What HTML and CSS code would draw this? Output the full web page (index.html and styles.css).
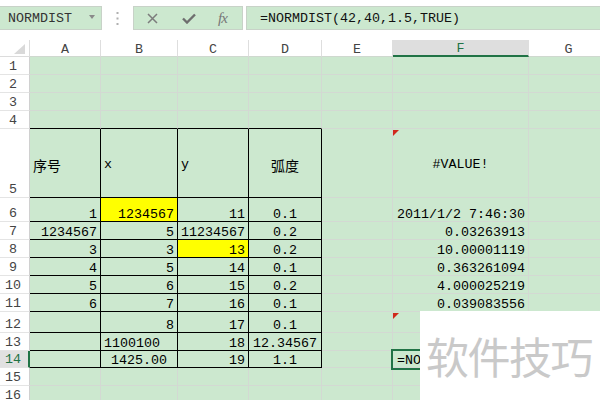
FILE: index.html
```html
<!DOCTYPE html>
<html>
<head>
<meta charset="utf-8">
<link rel="stylesheet" href="styles.css">
</head>
<body>
<div class="toolbar">
  <div class="namebox"><span class="nametext">NORMDIST</span><span class="arrow"></span></div>
  <div class="sep"><svg width="3" height="13" viewBox="0 0 3 13"><rect x="0.5" y="0" width="2" height="2" fill="#b0b0b0"/><rect x="0.5" y="5.5" width="2" height="2" fill="#b0b0b0"/><rect x="0.5" y="11" width="2" height="2" fill="#b0b0b0"/></svg></div>
  <div class="btns">
    <svg class="ic-x" width="11" height="11" viewBox="0 0 11 11"><path d="M1 1 L10 10 M10 1 L1 10" stroke="#7c7c7c" stroke-width="1.5" fill="none"/></svg>
    <svg class="ic-ok" width="14" height="11" viewBox="0 0 14 11"><path d="M1 5.5 L5 9.5 L13 1.5" stroke="#6e6e6e" stroke-width="2.4" fill="none"/></svg>
    <span class="fx">fx</span>
  </div>
  <div class="formula">=NORMDIST(42,40,1.5,TRUE)</div>
</div>

<div class="sheet">
  <div class="corner"><span class="tri"></span></div>
  <div class="ch">A</div><div class="ch">B</div><div class="ch">C</div><div class="ch">D</div><div class="ch">E</div><div class="ch selc">F</div><div class="ch">G</div>

  <div class="rh">1</div><div class="c"></div><div class="c"></div><div class="c"></div><div class="c"></div><div class="c"></div><div class="c"></div><div class="c"></div>
  <div class="rh">2</div><div class="c"></div><div class="c"></div><div class="c"></div><div class="c"></div><div class="c"></div><div class="c"></div><div class="c"></div>
  <div class="rh">3</div><div class="c"></div><div class="c"></div><div class="c"></div><div class="c"></div><div class="c"></div><div class="c"></div><div class="c"></div>
  <div class="rh">4</div><div class="c bb"></div><div class="c bb"></div><div class="c bb"></div><div class="c bb"></div><div class="c"></div><div class="c"></div><div class="c"></div>

  <div class="rh">5</div><div class="c k mid"><span class="zh">序号</span></div><div class="c k mid">x</div><div class="c k mid">y</div><div class="c k mid m"><span class="zh">弧度</span></div><div class="c"></div><div class="c mid m note">#VALUE!</div><div class="c"></div>

  <div class="rh">6</div><div class="c k r">1</div><div class="c k r y">1234567</div><div class="c k r">11</div><div class="c k m">0.1</div><div class="c"></div><div class="c r">2011/1/2 7:46:30</div><div class="c"></div>
  <div class="rh">7</div><div class="c k r">1234567</div><div class="c k r">5</div><div class="c k r">11234567</div><div class="c k m">0.2</div><div class="c"></div><div class="c r">0.03263913</div><div class="c"></div>
  <div class="rh">8</div><div class="c k r">3</div><div class="c k r">3</div><div class="c k r y">13</div><div class="c k m">0.2</div><div class="c"></div><div class="c r">10.00001119</div><div class="c"></div>
  <div class="rh">9</div><div class="c k r">4</div><div class="c k r">5</div><div class="c k r">14</div><div class="c k m">0.1</div><div class="c"></div><div class="c r">0.363261094</div><div class="c"></div>
  <div class="rh">10</div><div class="c k r">5</div><div class="c k r">6</div><div class="c k r">15</div><div class="c k m">0.2</div><div class="c"></div><div class="c r">4.000025219</div><div class="c"></div>
  <div class="rh">11</div><div class="c k r">6</div><div class="c k r">7</div><div class="c k r">16</div><div class="c k m">0.1</div><div class="c"></div><div class="c r">0.039083556</div><div class="c"></div>
  <div class="rh">12</div><div class="c k"></div><div class="c k r">8</div><div class="c k r">17</div><div class="c k m mark">0.1</div><div class="c"></div><div class="c note"></div><div class="c"></div>
  <div class="rh">13</div><div class="c k"></div><div class="c k">1100100</div><div class="c k r">18</div><div class="c k m">12.34567</div><div class="c"></div><div class="c"></div><div class="c"></div>
  <div class="rh selr">14</div><div class="c k"></div><div class="c k m">1425.00</div><div class="c k r">19</div><div class="c k m">1.1</div><div class="c"></div><div class="c active">=NORMDIST(42,40,1.5,TRUE)</div><div class="c"></div>
  <div class="rh">15</div><div class="c"></div><div class="c"></div><div class="c"></div><div class="c"></div><div class="c"></div><div class="c"></div><div class="c"></div>
  <div class="rh">16</div><div class="c"></div><div class="c"></div><div class="c"></div><div class="c"></div><div class="c"></div><div class="c"></div><div class="c"></div>
</div>

<div class="watermark">软件技巧</div>
</body>
</html>
```

FILE: styles.css
```css
html, body {
  margin: 0;
  padding: 0;
  width: 600px;
  height: 400px;
  overflow: hidden;
  background: #ffffff;
  font-family: "Liberation Mono", "Noto Sans CJK SC", monospace;
  font-size: 13.33px;
  color: #000;
}

.toolbar {
  height: 40px;
  box-sizing: border-box;
  padding-top: 6px;
  display: flex;
  align-items: flex-start;
}

.namebox {
  width: 102px;
  height: 24px;
  box-sizing: border-box;
  background: #cce8cf;
  border: 1px solid #c8d2c8;
  border-left: none;
  display: flex;
  align-items: center;
  padding-left: 8px;
  color: #333;
}
.nametext { flex: 1; }
.arrow {
  width: 0;
  height: 0;
  border-left: 3.5px solid transparent;
  border-right: 3.5px solid transparent;
  border-top: 4px solid #8a8a8a;
  margin-right: 6px;
  margin-top: -2px;
}

.sep {
  width: 31px;
  height: 24px;
  display: flex;
  align-items: center;
  justify-content: center;
}

.btns {
  width: 110px;
  height: 24px;
  box-sizing: border-box;
  background: #cce8cf;
  border: 1px solid #c8d2c8;
  display: flex;
  align-items: center;
  padding-left: 13px;
}
.ic-x { margin-right: 24px; }
.ic-ok { margin-right: 22px; margin-top: 1px; }
.fx {
  font-family: "Liberation Serif", serif;
  font-style: italic;
  font-size: 15px;
  color: #777;
  letter-spacing: -1px;
}

.formula {
  flex: 1;
  margin-left: 3px;
  height: 24px;
  box-sizing: border-box;
  background: #cce8cf;
  border: 1px solid #c8d2c8;
  border-right: none;
  display: flex;
  align-items: center;
  padding-left: 13px;
  color: #111;
}

.sheet {
  display: grid;
  grid-template-columns: 30px 71px 77px 71px 73px 71px 136px 80px;
  grid-template-rows: 17px 18px 18px 18px 18px 69px 24px 18px 18px 18px 18px 18px 21px 18px 17px 18px 18px;
  width: 600px;
  overflow: hidden;
}

.sheet > div {
  box-sizing: border-box;
  min-width: 0;
  overflow: hidden;
  white-space: nowrap;
}

.corner {
  background: #fff;
  border-right: 1px solid #dcdcdc;
  border-bottom: 1px solid #dcdcdc;
  display: flex;
  align-items: flex-end;
  justify-content: flex-end;
  padding: 0 4px 2px 0;
}
.tri {
  width: 11px;
  height: 10px;
  background: #d9d9d9;
  clip-path: polygon(100% 0, 100% 100%, 0 100%);
}

.ch {
  background: #fff;
  border-right: 1px solid #dedede;
  border-bottom: 1px solid #cfd8cf;
  display: flex;
  align-items: flex-end;
  justify-content: center;
  line-height: 13px;
  color: #444;
}
.ch.selc {
  background: #dedede;
  border-bottom: 2px solid #217346;
  color: #217346;
  line-height: 12px;
}

.rh {
  background: #fff;
  border-right: 1px solid #d0d0d0;
  border-bottom: 1px solid #e4e4e4;
  display: flex;
  align-items: flex-end;
  justify-content: center;
  padding-right: 3px;
  line-height: 14px;
  color: #444;
}
.rh.selr {
  background: #e1e1e1;
  border-right: 2px solid #217346;
  padding-right: 2px;
  color: #217346;
}

.c {
  background: #cce8cf;
  border-right: 1px solid #d3d9d3;
  border-bottom: 1px solid #d3d9d3;
  display: flex;
  align-items: flex-end;
  padding: 0 3px;
  line-height: 12px;
}
.c.k {
  border-right-color: #000;
  border-bottom-color: #000;
}
.c.bb { border-bottom-color: #000; }
.c.r { justify-content: flex-end; }
.c.m { justify-content: center; }
.c.mid { align-items: center; line-height: 16px; padding-top: 3px; }
.c.y { background: #ffff00; }
.zh { font-family: "Noto Sans CJK SC", sans-serif; font-size: 14px; }

.note { position: relative; }
.note::before {
  content: "";
  position: absolute;
  left: 0;
  top: 1px;
  width: 6px;
  height: 6px;
  background: #d0281c;
  clip-path: polygon(0 0, 100% 0, 0 100%);
}

.mark { position: relative; }
.mark::after {
  content: "";
  position: absolute;
  right: -1px;
  top: 2px;
  bottom: 3px;
  width: 1px;
  background: #f0805c;
}

.c.active {
  position: relative;
  z-index: 1;
  outline: 2px solid #217346;
  outline-offset: 0;
  overflow: visible;
  padding-left: 4px;
}

.watermark {
  position: absolute;
  left: 420px;
  top: 311px;
  width: 180px;
  height: 89px;
  background: #fff;
  z-index: 5;
  box-sizing: border-box;
  padding: 14px 0 0 6px;
  font-family: "Noto Sans CJK SC", sans-serif;
  font-size: 43px;
  line-height: 60px;
  letter-spacing: -1.5px;
  color: #c9c9c9;
}
```
